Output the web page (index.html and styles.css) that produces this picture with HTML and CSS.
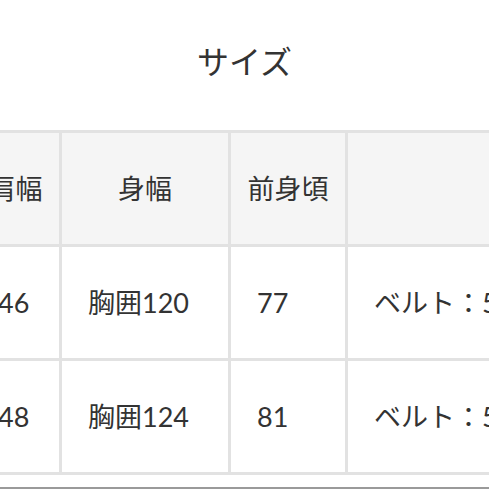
FILE: index.html
```html
<!DOCTYPE html>
<html lang="ja">
<head>
<meta charset="utf-8">
<link rel="stylesheet" href="styles.css">
</head>
<body>
<div class="page">
  <h2 class="title">サイズ</h2>
  <div class="table-wrap">
    <table class="size-table">
      <thead>
        <tr>
          <th class="c1">肩幅</th>
          <th class="c2">身幅</th>
          <th class="c3">前身頃</th>
          <th class="c4"></th>
        </tr>
      </thead>
      <tbody>
        <tr>
          <td class="c1">46</td>
          <td class="c2">胸囲120</td>
          <td class="c3">77</td>
          <td class="c4">ベルト：5cm</td>
        </tr>
        <tr>
          <td class="c1">48</td>
          <td class="c2">胸囲124</td>
          <td class="c3">81</td>
          <td class="c4">ベルト：5cm</td>
        </tr>
      </tbody>
    </table>
  </div>
  <div class="footer-line"></div>
</div>
</body>
</html>
```

FILE: styles.css
```css
html, body {
  margin: 0;
  padding: 0;
  background: #ffffff;
}

body {
  width: 489px;
  height: 489px;
  overflow: hidden;
  font-family: Lato, "Noto Sans CJK JP", sans-serif;
  color: #333333;
}

.page {
  display: flex;
  flex-direction: column;
}

.title {
  margin: 0;
  padding-top: 36px;
  height: 48px;
  line-height: 48px;
  font-size: 32px;
  font-weight: 400;
  text-align: center;
  color: #333333;
  font-family: "Noto Sans CJK JP", sans-serif;
  margin-bottom: 46px;
}

.table-wrap {
  margin-left: -31px;
  width: 700px;
}

.size-table {
  border-collapse: separate;
  border-spacing: 0;
  table-layout: fixed;
  border-top: 3px solid #e2e2e2;
  border-left: 3px solid #e2e2e2;
  font-size: 27px;
  line-height: 39px;
}

.size-table th,
.size-table td {
  box-sizing: border-box;
  border-right: 3px solid #e2e2e2;
  border-bottom: 3px solid #e2e2e2;
  height: 114px;
  padding: 0 0 0 26px;
  vertical-align: middle;
  white-space: nowrap;
  font-weight: 400;
  color: #333333;
}

.size-table th {
  background: #f5f5f5;
  text-align: center;
  padding: 0;
}

.size-table td {
  background: #ffffff;
  text-align: left;
}

.c1 { width: 90px; }
.c2 { width: 169px; }
.c3 { width: 117px; }
.c4 { width: 300px; }

.footer-line {
  margin-top: 12px;
  border-top: 2px solid #9a9a9a;
}
```
